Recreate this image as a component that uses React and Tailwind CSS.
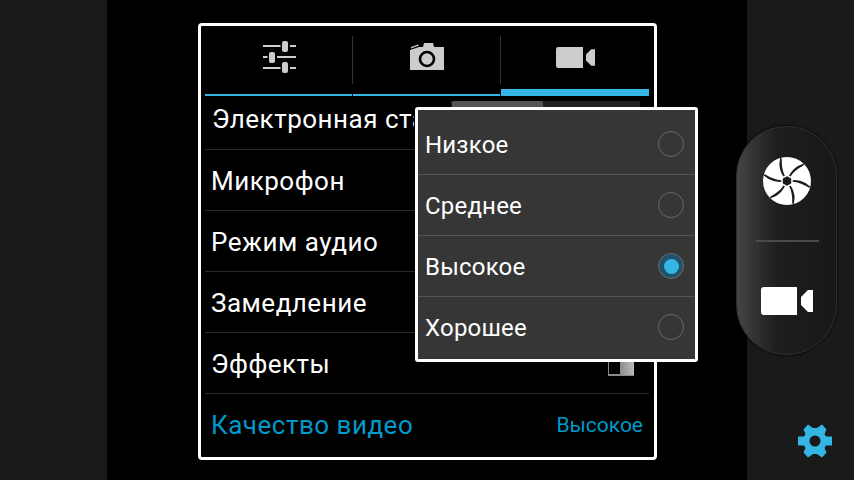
const sans = "font-['Roboto',sans-serif]";

const settingsRows = [
  { label: 'Электронная стабилизация' },
  { label: 'Микрофон' },
  { label: 'Режим аудио' },
  { label: 'Замедление' },
  { label: 'Эффекты' },
];

const qualityOptions = ['Низкое', 'Среднее', 'Высокое', 'Хорошее'];

function SlidersIcon() {
  return (
    <svg width="34" height="32" viewBox="0 0 34 32" fill="#cccccc" className="ml-[2px]">
      <rect x="0" y="4" width="33" height="2" />
      <rect x="19" y="0" width="6" height="11" rx="2" />
      <rect x="0" y="15" width="33" height="2" />
      <rect x="6" y="11" width="6" height="11" rx="2" />
      <rect x="0" y="26" width="33" height="2" />
      <rect x="19" y="21" width="6" height="11" rx="2" />
      <rect x="17.5" y="3" width="1.5" height="4" fill="#000" />
      <rect x="25" y="3" width="2" height="4" fill="#000" />
      <rect x="4.5" y="14" width="1.5" height="4" fill="#000" />
      <rect x="12" y="14" width="2" height="4" fill="#000" />
      <rect x="17.5" y="25" width="1.5" height="4" fill="#000" />
      <rect x="25" y="25" width="2" height="4" fill="#000" />
    </svg>
  );
}

function CameraIcon() {
  return (
    <svg width="34" height="28" viewBox="0 0 34 28">
      <path d="M0 7 L9 4 H13 L14 0 H23 L24 4 H34 V27 H0 Z" fill="#cccccc" />
      <path d="M1 4 L8 1.5 L9 2.5 L1 5.5 Z" fill="#cccccc" />
      <circle cx="17" cy="16" r="7" fill="none" stroke="#000" strokeWidth="2.6" />
    </svg>
  );
}

function VideoIcon({ color, width, height }) {
  return (
    <svg width={width} height={height} viewBox="0 0 52 28" fill={color}>
      <path d="M3 0 H36 V28 H3 Q0 28 0 25 V3 Q0 0 3 0 Z" />
      <path d="M52 3 V25 H47 L40 18 V10 L47 3 Z" />
    </svg>
  );
}

function ShutterIcon() {
  const blades = [0, 60, 120, 180, 240, 300];
  return (
    <svg width="50" height="50" viewBox="0 0 50 50" className="ml-[1px]">
      <circle cx="25" cy="25" r="24" fill="#ffffff" />
      {blades.map((angle) => (
        <path
          key={angle}
          d="M18.3 1 L17.4 8 Q17.6 15 21.4 20.5 L22.8 19.7 Q19.4 13 19.8 3 Z"
          fill="#1c1c1c"
          transform={`rotate(${angle} 25 25)`}
        />
      ))}
      <polygon points="25,20.2 29.2,22.6 29.2,27.4 25,29.8 20.8,27.4 20.8,22.6" fill="#1c1c1c" />
    </svg>
  );
}

function GearIcon() {
  return (
    <svg width="36" height="36" viewBox="0 0 36 36">
      <path
        d="M11 1.5 L16 5 H20 L25 1.5 L29.5 6.5 L27.5 11 L29 13.5 H35 V22.5 H29 L27.5 25 L29.5 29.5 L25 34.5 L20 31 H16 L11 34.5 L6.5 29.5 L8.5 25 L7 22.5 H1 V13.5 H7 L8.5 11 L6.5 6.5 Z"
        fill="#33b5e5"
      />
      <circle cx="18" cy="18" r="5.5" fill="#1a1a1a" />
    </svg>
  );
}

function Tab({ children, active, divider }) {
  return (
    <div className={`relative h-full flex flex-col ${active ? 'w-[148px]' : 'w-[147px]'}`}>
      <div className={`flex-1 flex items-center justify-center ${active ? 'pb-0' : 'pb-[6px]'}`}>{children}</div>
      {active ? (
        <div className="h-[7px] bg-[#33b5e5]"></div>
      ) : (
        <div className="h-[2px] bg-[#33b5e5]"></div>
      )}
      {divider && <div className="absolute right-[-1px] top-[10px] h-[48px] w-px bg-[#333333]"></div>}
    </div>
  );
}

function QualityMenu() {
  return (
    <div className="absolute left-[214px] top-[81px] w-[283px] h-[255px] bg-[#363636] border-[3px] border-white rounded-[3px]">
      {qualityOptions.map((option, i) => (
        <div
          key={option}
          className={`flex items-center justify-between pl-[7px] pr-[11px] ${i < 3 ? 'border-b border-[#555555]' : ''} ${i === 0 ? 'h-[65px] pt-[6px]' : i === 3 ? 'h-[61px]' : 'h-[61px] pt-[2px]'}`}
        >
          <span className="text-[24px] text-white tracking-[0.2px]">{option}</span>
          {option === 'Высокое' ? (
            <div className="w-[26px] h-[26px] -mt-[2px] rounded-full border border-[#6b6b6b] bg-[#20536a] flex items-center justify-center">
              <div className="w-[15px] h-[15px] rounded-full bg-[#33b5e5]"></div>
            </div>
          ) : (
            <div className="w-[26px] h-[26px] -mt-[2px] rounded-full border border-[#686868]"></div>
          )}
        </div>
      ))}
    </div>
  );
}

export default function App() {
  return (
    <div className={`${sans} w-[854px] h-[480px] flex bg-black overflow-hidden`}>
      <div className="w-[107px] bg-[#1a1a1a]"></div>

      <div className="flex-1 flex pl-[91px] pt-[23px]">
        <div className="relative w-[459px] h-[437px] border-[3px] border-white rounded-[4px] pl-[4px] pr-[5px] flex flex-col">
          <div className="h-[70px] flex gap-px">
            <Tab divider><SlidersIcon /></Tab>
            <Tab divider><CameraIcon /></Tab>
            <Tab active><VideoIcon color="#cccccc" width={39} height={21} /></Tab>
          </div>

          {settingsRows.map((row, i) => (
            <div
              key={row.label}
              className={`${i === 0 ? 'h-[54px] pb-[6px] pl-[7px]' : 'h-[61px] pt-[3px] pl-[6px]'} border-b border-[#2a2a2a] flex items-center relative`}
            >
              <span className={`text-[26px] text-white whitespace-nowrap tracking-[0.5px] ${i === 0 ? 'w-[202px] overflow-hidden' : ''}`}>{row.label}</span>
              {i === 0 && (
                <div className="absolute left-[246px] top-[5px] w-[189px] h-[6px] bg-[#1f1f1f] pl-px">
                  <div className="w-[91px] h-[6px] bg-[#555555] rounded-t-[2px]"></div>
                </div>
              )}
              {i === 4 && (
                <div className="absolute right-[15px] top-[27px] w-[26px] h-[16px] flex border-b border-[#888888] bg-gradient-to-r from-[#666666] to-[#bbbbbb]">
                  <div className="w-[13px] h-full bg-black border border-[#888888]"></div>
                </div>
              )}
            </div>
          ))}

          <div className="h-[63px] flex items-center justify-between pl-[6px] pr-[6px]">
            <span className="text-[26px] text-[#0099cc] tracking-[0.5px]">Качество видео</span>
            <span className="text-[21px] text-[#0099cc]">Высокое</span>
          </div>

          <QualityMenu />
        </div>
      </div>

      <div className="w-[107px] bg-[#1a1a1a] relative">
        <div className="absolute left-[-11px] top-[126px] w-[101px] h-[229px] rounded-[50px] border border-[#2e2e2e] shadow-[0_0_3px_#000] bg-gradient-to-r from-[#454545] via-[#1e1e1e] via-40% to-[#181818] flex flex-col items-center">
          <div className="h-[108px] w-full flex items-center justify-center">
            <ShutterIcon />
          </div>
          <div className="w-[63px] h-[2px] mt-[5px] ml-px bg-[#4a4a4a]"></div>
          <div className="flex-1 flex items-center justify-center pt-[6px]">
            <VideoIcon color="#ffffff" width={52} height={28} />
          </div>
        </div>
        <div className="absolute left-[50px] top-[423px]">
          <GearIcon />
        </div>
      </div>
    </div>
  );
}
